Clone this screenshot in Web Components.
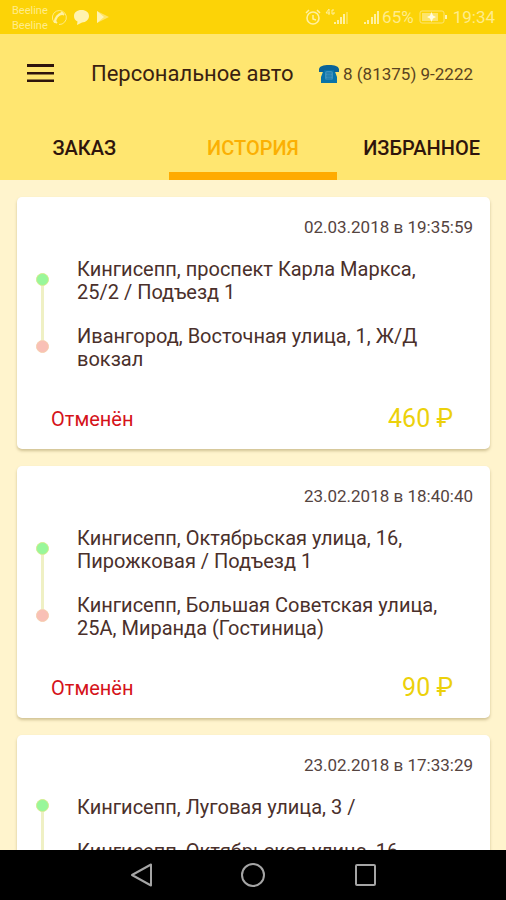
<!DOCTYPE html>
<html lang="ru">
<head>
<meta charset="utf-8">
<meta name="viewport" content="width=device-width, initial-scale=1">
<title>Персональное авто</title>
<style>
  body { margin: 0; font-family: Roboto, "Noto Sans", sans-serif; color: #4a302b; }
</style>
</head>
<body>
<taxi-app>
  <status-bar slot="status"></status-bar>
  <app-header slot="header" phone="8 (81375) 9-2222">Персональное авто</app-header>
  <tab-bar slot="header">
    <tab-item>ЗАКАЗ</tab-item>
    <tab-item selected>ИСТОРИЯ</tab-item>
    <tab-item>ИЗБРАННОЕ</tab-item>
  </tab-bar>
  <trip-card>
    <span slot="date">02.03.2018 в 19:35:59</span>
    <trip-stop kind="from">Кингисепп, проспект Карла Маркса, 25/2 / Подъезд 1</trip-stop>
    <trip-stop kind="to">Ивангород, Восточная улица, 1, Ж/Д вокзал</trip-stop>
    <span slot="state">Отменён</span>
    <span slot="price">460 ₽</span>
  </trip-card>
  <trip-card>
    <span slot="date">23.02.2018 в 18:40:40</span>
    <trip-stop kind="from">Кингисепп, Октябрьская улица, 16, Пирожковая / Подъезд 1</trip-stop>
    <trip-stop kind="to">Кингисепп, Большая Советская улица, 25А, Миранда (Гостиница)</trip-stop>
    <span slot="state">Отменён</span>
    <span slot="price">90 ₽</span>
  </trip-card>
  <trip-card>
    <span slot="date">23.02.2018 в 17:33:29</span>
    <trip-stop kind="from">Кингисепп, Луговая улица, 3 /</trip-stop>
    <trip-stop kind="to">Кингисепп, Октябрьская улица, 16,</trip-stop>
  </trip-card>
  <nav-bar slot="nav"></nav-bar>
</taxi-app>

<script>
const define = (name, html, setup) => customElements.define(name, class extends HTMLElement {
  constructor() {
    super();
    this.attachShadow({ mode: 'open' }).innerHTML = html;
  }
  connectedCallback() { if (setup) setup(this, this.shadowRoot); }
});

define('taxi-app', `
  <style>
    :host { display: flex; flex-direction: column; height: 100vh; background: #fff4cd; }
    header { background: #ffe670; flex: none; }
    main {
      flex: 1; min-height: 0; overflow-y: auto; scrollbar-width: none;
      display: flex; flex-direction: column; gap: 17px; padding: 17px 16px 17px 17px;
    }
  </style>
  <slot name="status"></slot>
  <header><slot name="header"></slot></header>
  <main><slot></slot></main>
  <slot name="nav"></slot>`);

define('status-bar', `
  <style>
    :host {
      display: flex; align-items: center; flex: none; height: 34px; padding: 0 11px 0 12px;
      box-sizing: border-box; background: #fcd307; color: #ffec8a; font-size: 17px;
    }
    .carriers { display: flex; flex-direction: column; font-size: 11px; line-height: 15px; width: 39px; padding-top: 2px; }
    .space { flex: 1; }
    svg { display: block; flex: none; }
    .left { display: flex; align-items: center; gap: 6px; }
    .right { display: flex; align-items: center; }
    .bars { margin-right: 14px; }
    .charge { margin: 0 6px 0 5px; }
    .alarm { margin-right: 3px; }
    .signal { margin-right: 2px; }
  </style>
  <div class="carriers"><span>Beeline</span><span>Beeline</span></div>
  <div class="left">
    <svg width="16" height="18" viewBox="0 0 16 18" fill="none" stroke="#fff0a0"><path d="M3 14A7 7 0 1 1 8 16.500" stroke-width="1" opacity=".8"/><path d="M4 15C4 10 7 6 12 5.500" stroke-width="2.500"/><path d="M3 13l3 2M10 4l3 3" stroke-width="2"/></svg>
    <svg width="17" height="18" viewBox="0 0 17 18" fill="#fff3b0"><path d="M8.500 2C13 2 16 4.500 16 8s-3 6.500-7 6.500L4 17l.5-3.500C2 12.500 1 10.500 1 8c0-3.500 3-6 7.500-6z"/></svg>
    <svg width="14" height="16" viewBox="0 0 14 16" fill="#fff3b0"><path d="M1 2l12 6-12 6z" opacity=".55"/><path d="M1 2l7 6-7 6z"/></svg>
  </div>
  <div class="space"></div>
  <div class="right">
    <svg class="alarm" width="18" height="18" viewBox="0 0 18 18" fill="none" stroke="#fff0a0"><circle cx="9" cy="10" r="6" stroke-width="1.600"/><path d="M9 7v4l3 1M2 5l3-3M16 5l-3-3" stroke-width="1.500"/></svg>
    <svg class="bars" width="25" height="18" viewBox="0 0 25 18" fill="#fff0a0"><path d="M4 1L1 5h4M4 1v6M9 2H7v4h2V4" fill="none" stroke="#fff0a0"/><path d="M9 14h2v2H9zM12 12h2v4h-2zM15 9h2v7h-2zM18 6h2v10h-2z"/><path d="M21 4h2v12h-2z" opacity=".45"/></svg>
    <svg class="signal" width="16" height="18" viewBox="0 0 16 18" fill="#fff0a0"><path d="M0 14h2v2H0zM3 12h2v4H3zM7 9h2v7H7zM10 6h2v10h-2zM13 3h2v13h-2z"/></svg>
    <span>65%</span>
    <svg class="charge" width="28" height="16" viewBox="0 0 28 16"><rect x="1" y="2" width="24" height="12" rx="2" fill="none" stroke="#fde572"/><path d="M3 4h16v8H3z" fill="#fde46a"/><path d="M26 6h2v4h-2z" fill="#fff3b0"/><path d="M12.500 3l1.500 3.500L17 8l-3 1.500-1.500 3.500L11 9.500 8 8l3-1.500z" fill="#fffbe0"/></svg>
    <span>19:34</span>
  </div>`);

define('app-header', `
  <style>
    :host { display: flex; align-items: center; height: 80px; padding: 0 33px 0 27px; color: #3a1f10; }
    button { border: 0; padding: 0; background: none; display: block; margin-right: 37px; }
    svg { display: block; flex: none; }
    h1 { flex: 1; margin: 0; font-size: 22px; font-weight: 400; line-height: 28px; white-space: nowrap; }
    a { display: flex; align-items: center; gap: 4px; color: #5a4320; font-size: 17px; line-height: 24px; text-decoration: none; white-space: nowrap; }
  </style>
  <button aria-label="Меню"><svg width="27" height="20" viewBox="0 0 27 20" fill="#2e140c"><path d="M0 0h27v3H0zM0 8h27v2.500H0zM0 15.500h27V18H0z"/></svg></button>
  <h1><slot></slot></h1>
  <a><svg width="20" height="20" viewBox="0 0 20 20"><path d="M5 5h10l3 8v6H2v-6z" fill="#0873a8"/><path d="M0 8V5c1-3 4-4 10-4s9 1 10 4v3h-5V6H5v2z" fill="#0a6397"/><rect x="6" y="7" width="8" height="9" rx="2" fill="#3c91bd"/><path d="M7 9h6M7 12h6M7 15h6M9 8v8M11 8v8" stroke="#1778a9" stroke-width=".7"/></svg><span></span></a>`,
  (el, root) => {
    const phone = el.getAttribute('phone');
    const link = root.querySelector('a');
    link.href = 'tel:' + phone.replace(/[^0-9]/g, '');
    link.querySelector('span').textContent = phone;
  });

define('tab-bar', `
  <style>:host { display: grid; grid-template-columns: repeat(3, 1fr); height: 66px; }</style>
  <slot></slot>`, el => el.setAttribute('role', 'tablist'));

define('tab-item', `
  <style>
    :host { display: flex; }
    button {
      flex: 1; border: 0; border-bottom: 8px solid transparent; padding: 9px 0 0; background: none;
      font: 500 20px/24px Roboto, "Noto Sans", sans-serif; color: #2e140c;
    }
    :host([selected]) button { color: #fbb003; border-color: #ffab00; }
  </style>
  <button role="tab"><slot></slot></button>`,
  (el, root) => root.querySelector('button').setAttribute('aria-selected', el.hasAttribute('selected')));

define('trip-card', `
  <style>
    :host {
      display: flex; flex-direction: column; flex: none; padding: 20px 17px 17px 19px;
      background: #fff; border-radius: 5px; box-shadow: 0 2px 3px rgba(90, 70, 0, .28);
    }
    .date { align-self: flex-end; font-size: 17px; line-height: 20px; color: #55443f; }
    .stops { display: flex; flex-direction: column; gap: 17px; margin: 17px 24px 35px 0; }
    footer { display: flex; justify-content: space-between; align-items: center; padding: 0 20px 0 15px; min-height: 26px; line-height: 26px; }
    .state { color: #d5131a; font-size: 20px; }
    .price { color: #ecd10b; font-size: 25px; }
  </style>
  <div class="date"><slot name="date"></slot></div>
  <div class="stops"><slot></slot></div>
  <footer><span class="state"><slot name="state"></slot></span><span class="price"><slot name="price"></slot></span></footer>`);

define('trip-stop', `
  <style>
    :host { display: grid; grid-template-columns: 13px 1fr; column-gap: 28px; font-size: 20px; line-height: 23px; }
    :host([kind="to"]) { min-height: 50px; }
    .rail { display: grid; grid-template-rows: 1fr 13px 1fr; justify-items: center; }
    .dot { grid-row: 2; width: 13px; height: 13px; box-sizing: border-box; border-radius: 50%; border: 1px solid #d3ec8c; background: #98f79a; }
    .line { width: 3px; background: #eff0c4; }
    :host([kind="from"]) .line { grid-row: 3; margin-bottom: -9px; }
    :host([kind="to"]) .line { grid-row: 1; margin-top: -8px; }
    :host([kind="to"]) .dot { background: #f9c0b6; border-color: #f6cfae; }
    .address { padding-top: 4px; }
  </style>
  <div class="rail"><div class="line"></div><div class="dot"></div></div>
  <div class="address"><slot></slot></div>`);

define('nav-bar', `
  <style>
    :host { display: flex; justify-content: center; align-items: center; gap: 86px; flex: none; height: 50px; background: #000; position: relative; }
    button { border: 0; padding: 0; background: none; display: block; }
    svg { display: block; fill: none; stroke: #a5a5a5; stroke-width: 2; }
  </style>
  <button aria-label="Назад"><svg width="26" height="26" viewBox="0 0 26 26"><path d="M23 2.500v21L4 13z" stroke-linejoin="round"/></svg></button>
  <button aria-label="Домой"><svg width="26" height="26" viewBox="0 0 26 26"><circle cx="13" cy="13" r="11"/></svg></button>
  <button aria-label="Недавние"><svg width="26" height="26" viewBox="0 0 26 26"><rect x="4" y="3" width="19" height="20" rx="1"/></svg></button>`);
</script>
</body>
</html>
